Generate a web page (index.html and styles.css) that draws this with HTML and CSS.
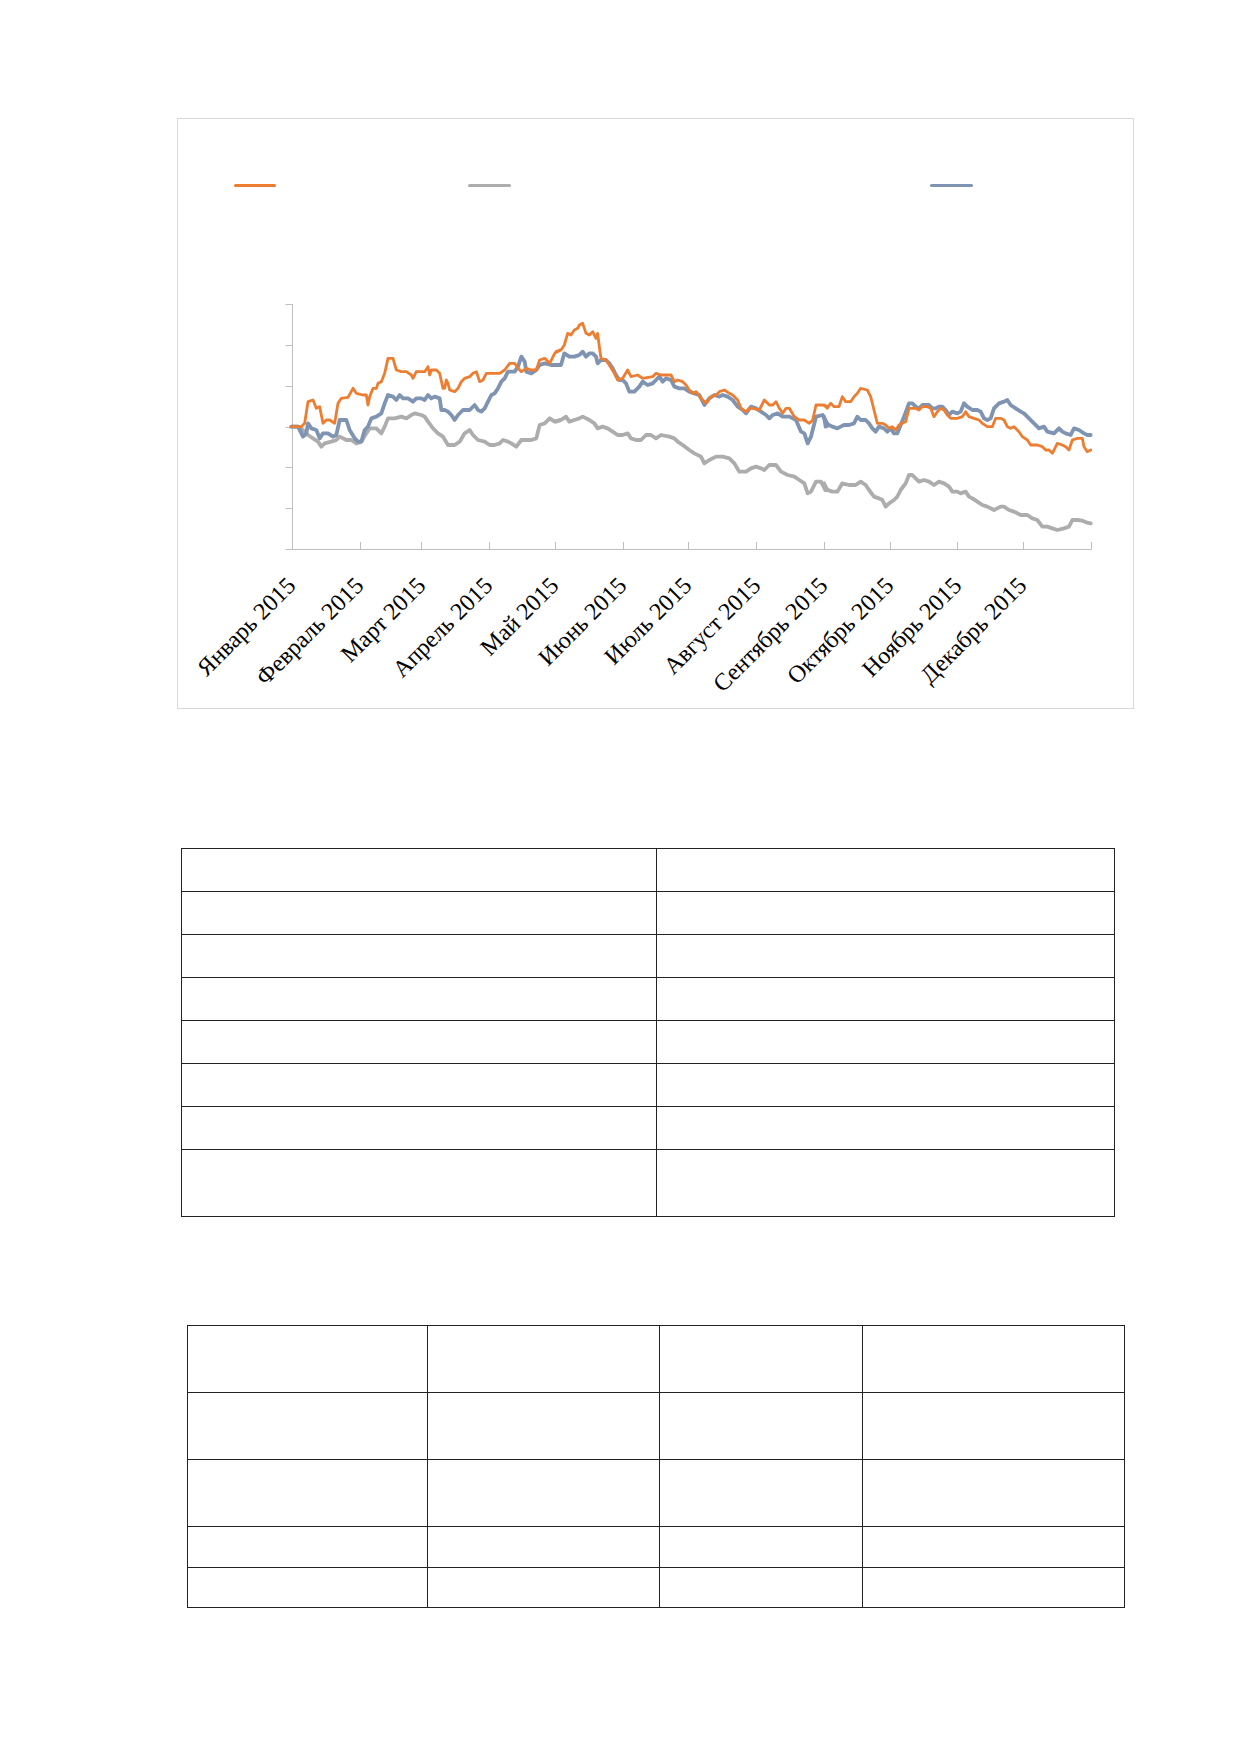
FILE: index.html
```html
<!DOCTYPE html>
<html lang="ru">
<head>
<meta charset="utf-8">
<title>Динамика индексов 2015</title>
<link rel="stylesheet" href="styles.css">
</head>
<body>
<main class="page">
  <figure class="chart">
    <div class="legend">
      <div class="legend-item"><span class="key key-orange"></span><span class="legend-label"></span></div>
      <div class="legend-item"><span class="key key-gray"></span><span class="legend-label"></span></div>
      <div class="legend-item"><span class="key key-blue"></span><span class="legend-label"></span></div>
    </div>
    <svg class="plot" width="955" height="521" viewBox="178 187 955 521" xmlns="http://www.w3.org/2000/svg">
      <path class="axis" d="M292.5 304 V549.5 M285.5 304.5 H292.5 M285.5 345.5 H292.5 M285.5 386.5 H292.5 M285.5 427.5 H292.5 M285.5 467.5 H292.5 M285.5 508.5 H292.5 M285.5 549.5 H1091.5 M360.5 542 V549 M421.5 542 V549 M489.5 542 V549 M555.5 542 V549 M623.5 542 V549 M688.5 542 V549 M756.5 542 V549 M824.5 542 V549 M890.5 542 V549 M957.5 542 V549 M1023.5 542 V549 M1091.5 542 V549"/>

      <g transform="translate(288 310) scale(0.3333333)">
        <polyline class="series s-gray" points="10,350 30,350 45,360 60,375 75,385 90,395 100,410 110,400 130,395 145,390 155,380 175,390 190,390 205,400 220,395 235,370 245,355 265,355 280,370 290,350 300,325 320,325 340,320 355,325 370,315 380,310 400,315 410,320 420,335 435,355 450,370 465,380 480,405 500,405 515,395 530,370 545,360 555,375 570,390 590,395 605,405 620,405 635,400 645,390 660,395 670,400 685,410 700,390 715,390 730,390 745,385 755,345 770,340 785,325 800,335 816,330"/>
        <polyline class="series s-blue" points="10,350 30,350 45,380 55,370 60,340 70,355 85,360 95,385 105,370 120,370 135,380 145,375 155,330 175,330 185,360 200,385 210,395 220,395 230,360 240,350 250,325 265,320 280,310 290,280 300,255 315,260 325,270 335,255 345,265 360,265 375,275 385,265 400,265 410,270 420,255 430,265 440,260 455,265 460,300 470,300 480,305 490,315 500,330 510,315 525,300 545,300 560,285 570,300 580,305 590,295 600,275 610,255 620,250 630,235 640,215 650,205 660,185 680,185 690,170 700,140 710,155 715,185 730,190 745,180 755,165 770,160 790,165 816,165"/>
        <polyline class="series s-orange" points="10,350 40,350 50,340 60,275 75,270 85,295 95,290 105,340 115,330 125,330 140,340 150,280 160,265 180,262 195,235 205,250 225,255 235,255 240,285 245,260 255,235 265,235 270,220 280,215 290,190 300,145 315,145 325,180 340,185 355,185 370,195 375,205 385,185 395,185 410,185 420,170 425,195 430,180 445,180 455,190 465,235 470,235 475,210 480,220 485,240 500,245 510,235 520,215 530,205 545,200 555,190 565,185 575,215 585,210 595,190 610,190 635,190 650,180 665,160 680,160 690,175 700,185 715,175 730,180 745,180 755,150 770,145 785,160 800,130 816,120"/>
      </g>

      <g transform="translate(556 310) scale(0.3333333)">
        <polyline class="series s-gray" points="0,335 15,330 30,320 40,335 55,330 70,325 80,320 100,330 115,340 125,355 140,350 155,355 170,365 185,375 200,375 215,370 225,385 240,390 255,390 270,375 285,375 300,385 315,375 340,380 355,385 365,395 380,405 400,420 415,430 435,440 445,460 460,450 480,440 500,440 520,445 535,460 550,485 570,485 585,475 600,470 615,475 625,480 640,465 660,465 675,485 695,495 715,500 730,510 745,520 755,550 765,545 780,515 795,515 808,540 816,540"/>
        <polyline class="series s-blue" points="0,165 15,165 25,130 40,140 55,140 70,135 80,125 90,140 100,130 110,130 120,140 125,160 135,150 150,150 160,160 170,175 180,195 190,210 200,210 210,220 220,245 235,245 250,230 260,215 275,225 290,220 300,210 310,200 320,215 330,205 345,210 355,230 370,235 385,235 400,245 415,250 430,255 445,285 460,265 475,255 490,260 500,255 515,260 530,270 545,290 560,300 570,310 585,290 600,295 615,305 630,315 640,325 650,315 665,310 680,320 700,320 720,330 735,365 745,370 755,400 765,380 780,320 800,315 816,345"/>
        <polyline class="series s-orange" points="0,125 15,120 25,105 35,70 45,75 55,60 65,55 70,45 80,40 90,70 100,75 110,65 120,85 125,70 130,110 135,145 150,150 160,165 175,190 185,210 200,205 215,180 225,200 245,195 260,205 290,200 300,190 315,195 345,195 355,215 365,210 380,215 390,225 400,240 410,250 420,245 435,265 450,280 465,260 480,255 490,245 505,240 520,250 530,255 545,270 555,295 570,305 580,295 590,295 610,300 625,270 640,285 650,285 660,275 670,295 680,310 690,295 700,295 715,320 730,330 745,330 760,340 770,330 780,285 800,285 816,290"/>
      </g>

      <g transform="translate(824 310) scale(0.3333333)">
        <polyline class="series s-gray" points="0,520 10,540 25,545 40,545 55,520 75,525 95,525 110,515 125,525 135,540 150,560 165,565 175,570 185,590 195,580 210,570 220,560 230,540 245,520 255,495 265,495 275,505 285,515 300,510 315,515 330,525 345,515 360,520 375,530 385,545 400,545 410,550 425,545 435,560 445,565 460,575 475,585 490,590 510,600 530,590 540,590 555,600 570,605 590,615 610,615 625,625 640,630 655,650 670,650 685,655 700,660 720,655 735,650 745,630 760,630 775,632 790,638 800,640"/>
        <polyline class="series s-blue" points="0,320 5,350 15,345 25,350 40,355 50,350 60,345 75,345 90,340 100,320 110,330 125,330 135,340 145,355 155,365 165,350 180,355 190,365 200,355 210,370 220,370 230,345 240,320 255,280 265,280 275,290 285,295 295,285 315,285 325,295 335,295 345,290 355,290 365,300 375,315 385,305 400,310 410,305 420,280 430,290 445,300 460,300 470,305 480,325 490,330 500,325 510,295 525,280 540,275 550,270 560,285 575,295 590,305 600,310 615,325 630,340 645,355 660,350 670,365 690,370 705,355 715,365 725,370 740,375 750,355 765,360 780,370 790,375 800,375"/>
        <polyline class="series s-orange" points="0,285 10,295 20,280 30,290 45,290 55,260 65,275 80,275 90,260 100,250 110,235 130,240 140,260 150,300 160,340 175,340 185,345 195,355 205,350 215,360 225,345 235,340 245,335 255,295 275,295 285,300 295,290 310,290 320,295 330,320 340,305 350,295 360,300 370,315 380,325 400,325 415,320 425,305 435,320 450,325 465,330 475,340 490,350 505,350 515,325 530,325 540,330 550,350 560,355 570,350 585,365 595,380 610,390 620,405 640,405 655,410 665,420 675,420 685,430 700,400 715,405 725,410 735,420 745,390 760,385 775,385 780,410 790,425 800,420"/>
      </g>

      <g class="axis-labels">
        <text x="297" y="587" transform="rotate(-45 297 587)">Январь 2015</text>
        <text x="365" y="587" transform="rotate(-45 365 587)">Февраль 2015</text>
        <text x="427" y="587" transform="rotate(-45 427 587)">Март 2015</text>
        <text x="494" y="587" transform="rotate(-45 494 587)">Апрель 2015</text>
        <text x="560" y="587" transform="rotate(-45 560 587)">Май 2015</text>
        <text x="628" y="587" transform="rotate(-45 628 587)">Июнь 2015</text>
        <text x="693" y="587" transform="rotate(-45 693 587)">Июль 2015</text>
        <text x="762" y="587" transform="rotate(-45 762 587)">Август 2015</text>
        <text x="829" y="587" transform="rotate(-45 829 587)">Сентябрь 2015</text>
        <text x="895" y="587" transform="rotate(-45 895 587)">Октябрь 2015</text>
        <text x="963" y="587" transform="rotate(-45 963 587)">Ноябрь 2015</text>
        <text x="1028" y="587" transform="rotate(-45 1028 587)">Декабрь 2015</text>
      </g>
    </svg>
  </figure>

  <div class="table table-one">
    <div class="cell"></div><div class="cell"></div>
    <div class="cell"></div><div class="cell"></div>
    <div class="cell"></div><div class="cell"></div>
    <div class="cell"></div><div class="cell"></div>
    <div class="cell"></div><div class="cell"></div>
    <div class="cell"></div><div class="cell"></div>
    <div class="cell"></div><div class="cell"></div>
    <div class="cell"></div><div class="cell"></div>
  </div>

  <div class="table table-two">
    <div class="cell"></div><div class="cell"></div><div class="cell"></div><div class="cell"></div>
    <div class="cell"></div><div class="cell"></div><div class="cell"></div><div class="cell"></div>
    <div class="cell"></div><div class="cell"></div><div class="cell"></div><div class="cell"></div>
    <div class="cell"></div><div class="cell"></div><div class="cell"></div><div class="cell"></div>
    <div class="cell"></div><div class="cell"></div><div class="cell"></div><div class="cell"></div>
  </div>
</main>
</body>
</html>
```

FILE: styles.css
```css
* {
  box-sizing: border-box;
}

html, body {
  margin: 0;
  padding: 0;
  background: #ffffff;
}

body {
  font-family: "Liberation Serif", "Times New Roman", serif;
  color: #000;
}

.page {
  width: 1239px;
  min-height: 1752px;
  padding-top: 118px;
  display: flex;
  flex-direction: column;
  align-items: flex-start;
}

.chart {
  margin: 0 0 0 177px;
  width: 957px;
  height: 591px;
  border: 1px solid #d9d9d9;
  background: #fff;
}

.legend {
  display: grid;
  grid-template-columns: 234px 462px auto;
  padding-left: 56px;
  margin-top: 65px;
  height: 3px;
}

.legend-item {
  display: flex;
  align-items: center;
  height: 3px;
}

.key {
  display: block;
  width: 43px;
  height: 3px;
  border-radius: 2px;
}

.key-orange { background: #ED7D31; width: 42px; }
.key-gray { background: #ADADAD; }
.key-blue { background: #7F93B2; }

.legend-label {
  display: block;
}

.plot {
  display: block;
}

.axis {
  fill: none;
  stroke: #BFBFBF;
  stroke-width: 1;
}

.series {
  fill: none;
  stroke-linejoin: round;
  stroke-linecap: round;
  vector-effect: non-scaling-stroke;
}

.s-orange { stroke: #ED7D31; stroke-width: 2.8px; }
.s-gray { stroke: #ADADAD; stroke-width: 3.8px; }
.s-blue { stroke: #7F93B2; stroke-width: 3.8px; }

.axis-labels text {
  font-family: "Liberation Serif", "Times New Roman", serif;
  font-size: 24px;
  fill: #000;
  text-anchor: end;
}

.table {
  display: grid;
  border-top: 1px solid #222;
  border-left: 1px solid #222;
}

.cell {
  border-right: 1px solid #222;
  border-bottom: 1px solid #222;
}

.table-one {
  margin: 139px 0 0 181px;
  grid-template-columns: 475px 458px;
  grid-template-rows: repeat(7, 43px) 67px;
}

.table-two {
  margin: 108px 0 0 187px;
  grid-template-columns: 240px 232px 203px 262px;
  grid-template-rows: 67px 67px 67px 41px 40px;
}
```
